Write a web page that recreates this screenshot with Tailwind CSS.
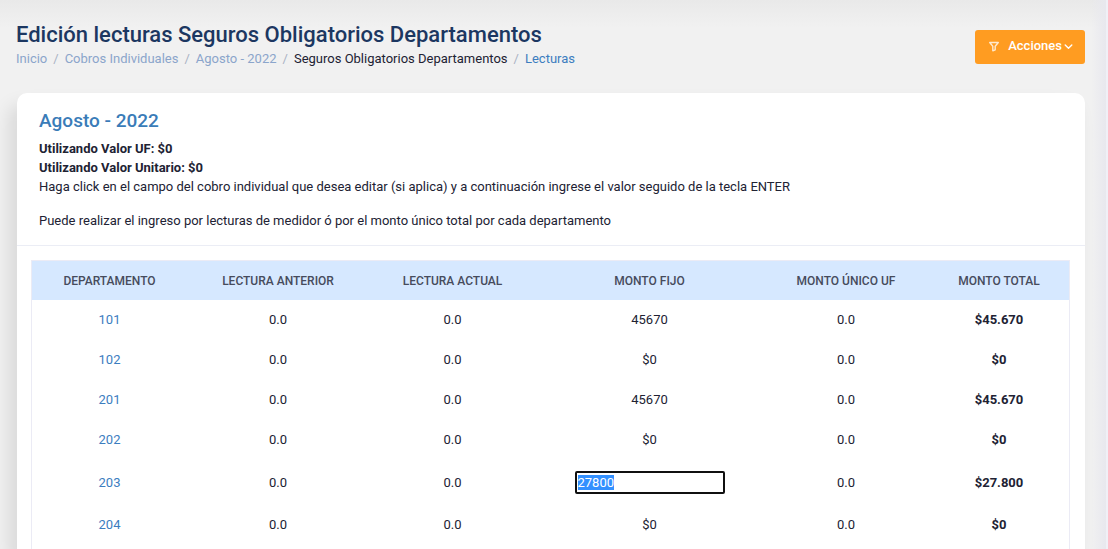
<!DOCTYPE html>
<html lang="es">
<head>
<meta charset="utf-8">
<meta name="viewport" content="width=device-width, initial-scale=1">
<title>Edición lecturas Seguros Obligatorios Departamentos</title>
<script src="https://cdn.jsdelivr.net/npm/@tailwindcss/browser@4"></script>
</head>
<body class="bg-[#f1f1f1] font-['Roboto',sans-serif] text-[13px] leading-5 text-[#212233]">
<div class="flex min-h-screen overflow-hidden bg-linear-to-b from-[#e9e9e9] to-[#f1f1f1] to-[28px]">
  <main class="flex min-w-0 flex-1 flex-col pl-4">
    <header class="flex items-start justify-between pt-5">
      <div>
        <h1 class="text-[22px] leading-[29px] font-medium text-[#1c3761]">Edición lecturas Seguros Obligatorios Departamentos</h1>
        <nav aria-label="Ruta">
          <ol class="flex gap-1.5 text-[#8ba5cb]">
            <li><a href="#">Inicio</a></li>
            <li aria-hidden="true" class="text-[#a9b2c4]">/</li>
            <li><a href="#">Cobros Individuales</a></li>
            <li aria-hidden="true" class="text-[#a9b2c4]">/</li>
            <li><a href="#">Agosto - 2022</a></li>
            <li aria-hidden="true" class="text-[#a9b2c4]">/</li>
            <li class="text-[#212233]">Seguros Obligatorios Departamentos</li>
            <li aria-hidden="true" class="text-[#a9b2c4]">/</li>
            <li><a href="#" class="text-[#3c7dbf]">Lecturas</a></li>
          </ol>
        </nav>
      </div>
      <button type="button" class="mt-[10px] flex h-[34px] items-center rounded-[3px] bg-[#ff9c21] pr-3 pl-[13px] pb-[2px] font-medium text-white">
        <svg class="mr-2 size-3" viewBox="0 0 12 12" fill="none" stroke="#ffe9cc" stroke-width="1.4" stroke-linejoin="round" aria-hidden="true"><path d="M1.700 2.500h8.600L7.200 6.200v3.600l-2.400 1V6.200z"/></svg>
        Acciones
        <svg class="ml-[2px] size-[9px]" viewBox="0 0 9 9" fill="none" stroke="currentColor" stroke-width="1.400" stroke-linecap="round" stroke-linejoin="round" aria-hidden="true"><path d="M1.200 3l3.300 3.300L7.800 3"/></svg>
      </button>
    </header>

    <section class="mt-6 ml-px flex flex-1 flex-col rounded-t-[10px] bg-white shadow-[-8px_12px_18px_0_rgba(0,0,0,0.10)]">
      <div class="border-b border-[#ebedf5] px-[22px] pt-4 pb-[15px]">
        <h2 class="mb-1.5 text-[19px] leading-6 font-medium text-[#3a7cb8]">Agosto - 2022</h2>
        <div class="leading-[19px]">
          <p class="font-bold">Utilizando Valor UF: $0</p>
          <p class="font-bold">Utilizando Valor Unitario: $0</p>
          <p>Haga click en el campo del cobro individual que desea editar (si aplica) y a continuación ingrese el valor seguido de la tecla ENTER</p>
          <p class="mt-[15px]">Puede realizar el ingreso por lecturas de medidor ó por el monto único total por cada departamento</p>
        </div>
      </div>
      <div class="flex flex-1 flex-col pt-[14px] pr-[15px] pl-[14px]">
        <div class="flex-1 border border-b-0 border-[#ebebf5]">
        <table class="w-full table-fixed border-collapse text-center">
          <colgroup>
            <col class="w-[155px]"><col class="w-[182px]"><col class="w-[167px]"><col class="w-[227px]"><col class="w-[166px]"><col class="w-[140px]">
          </colgroup>
          <thead class="bg-[#d6e8ff] text-xs text-[#464b5c]">
            <tr class="h-[39px]">
              <th scope="col" class="font-medium">DEPARTAMENTO</th>
              <th scope="col" class="font-medium">LECTURA ANTERIOR</th>
              <th scope="col" class="font-medium">LECTURA ACTUAL</th>
              <th scope="col" class="font-medium">MONTO FIJO</th>
              <th scope="col" class="font-medium">MONTO ÚNICO UF</th>
              <th scope="col" class="font-medium">MONTO TOTAL</th>
            </tr>
          </thead>
          <tbody>
            <tr class="h-10"><td><a href="#" class="text-[#3c7dbf]">101</a></td><td>0.0</td><td>0.0</td><td>45670</td><td>0.0</td><td class="font-bold">$45.670</td></tr>
            <tr class="h-10"><td><a href="#" class="text-[#3c7dbf]">102</a></td><td>0.0</td><td>0.0</td><td>$0</td><td>0.0</td><td class="font-bold">$0</td></tr>
            <tr class="h-10"><td><a href="#" class="text-[#3c7dbf]">201</a></td><td>0.0</td><td>0.0</td><td>45670</td><td>0.0</td><td class="font-bold">$45.670</td></tr>
            <tr class="h-10"><td><a href="#" class="text-[#3c7dbf]">202</a></td><td>0.0</td><td>0.0</td><td>$0</td><td>0.0</td><td class="font-bold">$0</td></tr>
            <tr class="h-[45px]"><td><a href="#" class="text-[#3c7dbf]">203</a></td><td>0.0</td><td>0.0</td><td><input id="monto" type="text" value="27800" aria-label="Monto fijo departamento 203" class="mx-auto block h-[23px] w-[150px] rounded-[2px] border-2 border-[#101010] bg-white px-px outline-none selection:bg-[#3390ff] selection:text-white"></td><td>0.0</td><td class="font-bold">$27.800</td></tr>
            <tr class="h-10"><td><a href="#" class="text-[#3c7dbf]">204</a></td><td>0.0</td><td>0.0</td><td>$0</td><td>0.0</td><td class="font-bold">$0</td></tr>
          </tbody>
        </table>
        </div>
      </div>
    </section>
  </main>
  <div class="w-[23px] shrink-0 border-r-2 border-[#f0f0f6] bg-linear-to-r from-[#e8e8ee]/0 from-30% to-[#e8e8ee]"></div>
</div>
<script>
  const monto = document.getElementById('monto');
  monto.focus({ preventScroll: true });
  monto.select();
</script>
</body>
</html>
